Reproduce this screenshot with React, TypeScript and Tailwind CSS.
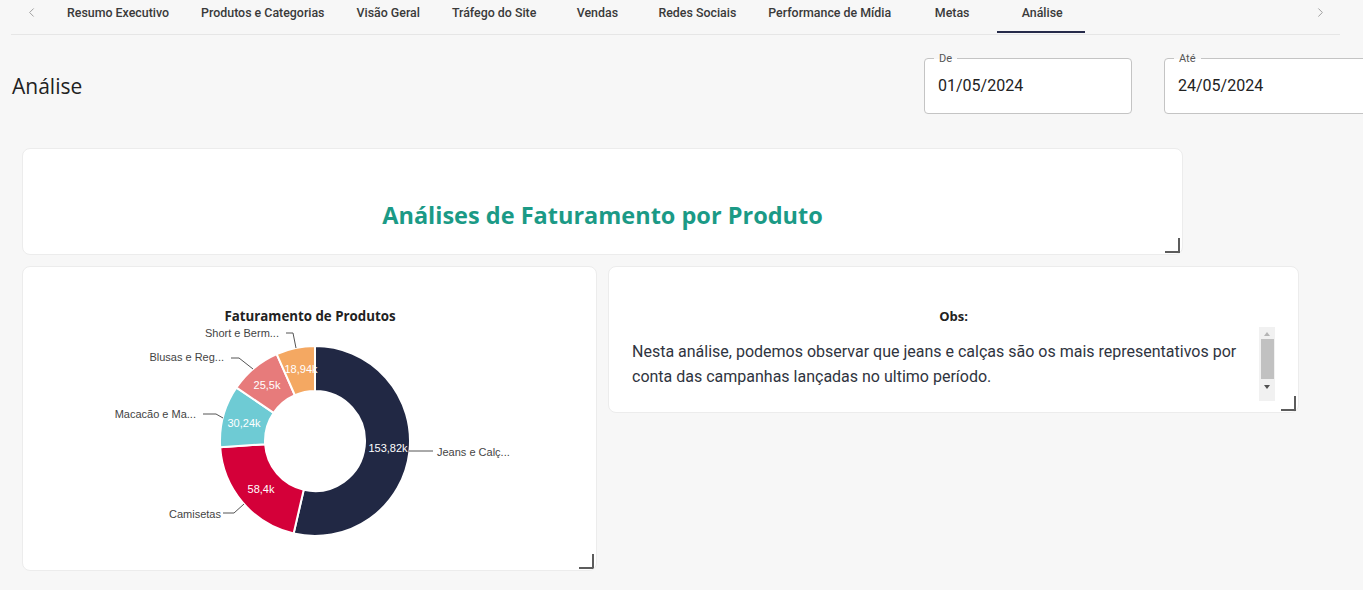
import { ChevronLeft, ChevronRight } from "lucide-react";

const tabs = [
  "Resumo Executivo",
  "Produtos e Categorias",
  "Visão Geral",
  "Tráfego do Site",
  "Vendas",
  "Redes Sociais",
  "Performance de Mídia",
  "Metas",
  "Análise",
];

const slices = [
  { name: "Jeans e Calças", value: 153.82, color: "#212844" },
  { name: "Camisetas", value: 58.4, color: "#d40039" },
  { name: "Macacão e Macaquinho", value: 30.24, color: "#6ecbd4" },
  { name: "Blusas e Regatas", value: 25.5, color: "#e77b7b" },
  { name: "Short e Bermuda", value: 18.94, color: "#f4a862" },
];

const CX = 292;
const CY = 174;
const R_OUT = 95;
const R_IN = 50;

function pt(a: number, r: number) {
  const rad = (a * Math.PI) / 180;
  return `${(CX + r * Math.sin(rad)).toFixed(2)} ${(CY - r * Math.cos(rad)).toFixed(2)}`;
}

function arcPath(a0: number, a1: number) {
  const large = a1 - a0 > 180 ? 1 : 0;
  return [
    `M ${pt(a0, R_OUT)}`,
    `A ${R_OUT} ${R_OUT} 0 ${large} 1 ${pt(a1, R_OUT)}`,
    `L ${pt(a1, R_IN)}`,
    `A ${R_IN} ${R_IN} 0 ${large} 0 ${pt(a0, R_IN)}`,
    "Z",
  ].join(" ");
}

function ResizeHandle() {
  return (
    <div className="absolute right-[2px] bottom-[1px] h-[15px] w-[15px] border-r-2 border-b-2 border-[#5c5c5c]" />
  );
}

function DateField({ label, value }: { label: string; value: string }) {
  return (
    <div className="relative h-[56px] w-[208px] shrink-0 rounded-[4px] border border-[#c4c4c4] bg-white">
      <span className="absolute left-[9px] top-[-7px] bg-[linear-gradient(#f7f7f7_0_7px,#fff_7px)] px-[5px] text-[11px] leading-[14px] text-[#555]">
        {label}
      </span>
      <div className="pl-[13px] pt-[16px] text-[16px] leading-[22px] text-[#222]">{value}</div>
    </div>
  );
}

function DonutChart() {
  const total = slices.reduce((s, d) => s + d.value, 0);
  let acc = 0;
  const arcs = slices.map((d) => {
    const a0 = (acc / total) * 360;
    acc += d.value;
    const a1 = (acc / total) * 360;
    return { ...d, a0, a1 };
  });

  return (
    <svg width="575" height="305" className="block" style={{ fontFamily: "'Liberation Sans', Arial, sans-serif" }}>
      <text
        x="287"
        y="54"
        textAnchor="middle"
        fontSize="13.3"
        fontWeight="700"
        fill="#222"
        style={{ fontFamily: "'Open Sans', sans-serif" }}
      >
        Faturamento de Produtos
      </text>
      {arcs.map((a) => (
        <path key={a.name} d={arcPath(a.a0, a.a1)} fill={a.color} stroke="#fff" strokeWidth="2" strokeLinejoin="round" />
      ))}
      <g fill="none" stroke="#555" strokeWidth="1">
        <polyline points="386,184 410,184" />
        <polyline points="200,246 211,246 221,237" />
        <polyline points="180,147 193,147 200,151" />
        <polyline points="208,91 216,91 230,102" />
        <polyline points="263,66 270,66 273,81" />
      </g>
      <g fontSize="11" fill="#fff" textAnchor="middle">
        <text x="365" y="185">153,82k</text>
        <text x="238" y="226">58,4k</text>
        <text x="221" y="160">30,24k</text>
        <text x="244" y="122">25,5k</text>
        <text x="278" y="106">18,94k</text>
      </g>
      <g fontSize="11" fill="#444">
        <text x="414" y="189">Jeans e Calç...</text>
        <text x="198" y="251" textAnchor="end">Camisetas</text>
        <text x="173" y="151" textAnchor="end">Macacão e Ma...</text>
        <text x="201" y="94" textAnchor="end">Blusas e Reg...</text>
        <text x="256" y="70" textAnchor="end">Short e Berm...</text>
      </g>
    </svg>
  );
}

export default function App() {
  return (
    <main className="min-h-screen w-[1363px] overflow-hidden bg-[#f7f7f7] font-['Roboto',sans-serif]">
      {/* tabs */}
      <div className="ml-[11px] flex h-[35px] w-[1329px] border-b border-[#e6e6e6]">
        <div className="flex w-[40px] items-start justify-center pt-[5px] text-[#9a9a9a]">
          <ChevronLeft size={15} strokeWidth={1.5} />
        </div>
        <div className="flex flex-1">
          {tabs.map((t) => {
            const active = t === "Análise";
            return (
              <div
                key={t}
                className="relative flex h-[34px] min-w-[90px] justify-center px-[16px] pt-[4px] text-[12.4px] font-medium leading-[18px] text-[#3a3a3a]"
              >
                {t}
                {active && <div className="absolute bottom-[1px] left-0 right-[2px] h-[2px] bg-[#262b4a]" />}
              </div>
            );
          })}
        </div>
        <div className="flex w-[40px] items-start justify-center pt-[5px] text-[#9a9a9a]">
          <ChevronRight size={15} strokeWidth={1.5} />
        </div>
      </div>

      {/* header */}
      <div className="mt-[23px] flex items-center pl-[12px]">
        <h1 className="font-['Open_Sans',sans-serif] text-[21px] leading-[28px] text-[#222]">Análise</h1>
        <div className="ml-auto mr-[-9px] flex gap-[32px]">
          <DateField label="De" value="01/05/2024" />
          <DateField label="Até" value="24/05/2024" />
        </div>
      </div>

      {/* title card */}
      <div className="relative ml-[22px] mt-[34px] h-[107px] w-[1161px] rounded-[8px] border border-[#ececec] bg-white">
        <h2 className="pt-[51px] text-center font-['Open_Sans',sans-serif] text-[23.5px] font-bold leading-[30px] text-[#1b9a86]">
          Análises de Faturamento por Produto
        </h2>
        <ResizeHandle />
      </div>

      {/* content */}
      <div className="ml-[22px] mt-[11px] flex items-start gap-[11px]">
        <div className="relative h-[305px] w-[575px] overflow-hidden rounded-[8px] border border-[#ececec] bg-white">
          <DonutChart />
          <ResizeHandle />
        </div>

        <div className="relative h-[147px] w-[691px] rounded-[8px] border border-[#ececec] bg-white">
          <div className="pt-[41px] text-center font-['Open_Sans',sans-serif] text-[13px] font-bold leading-[16px] text-[#222]">
            Obs:
          </div>
          <div className="mt-[3px] flex pl-[23px] pr-[23px]">
            <p className="min-w-0 flex-1 whitespace-nowrap pt-[12px] text-[16px] leading-[25px] text-[#2f3440]">
              Nesta análise, podemos observar que jeans e calças são os mais representativos por
              <br />
              conta das campanhas lançadas no ultimo período.
            </p>
            <div className="flex h-[74px] w-[16px] shrink-0 flex-col items-center bg-[#f1f1f1]">
              <div className="mt-[5px] h-0 w-0 border-x-[3px] border-b-[4px] border-x-transparent border-b-[#b5b5b5]" />
              <div className="mt-[3px] h-[40px] w-[13px] bg-[#c1c1c1]" />
              <div className="mt-[6px] h-0 w-0 border-x-[3px] border-t-[4px] border-x-transparent border-t-[#505050]" />
            </div>
          </div>
          <ResizeHandle />
        </div>
      </div>
    </main>
  );
}
